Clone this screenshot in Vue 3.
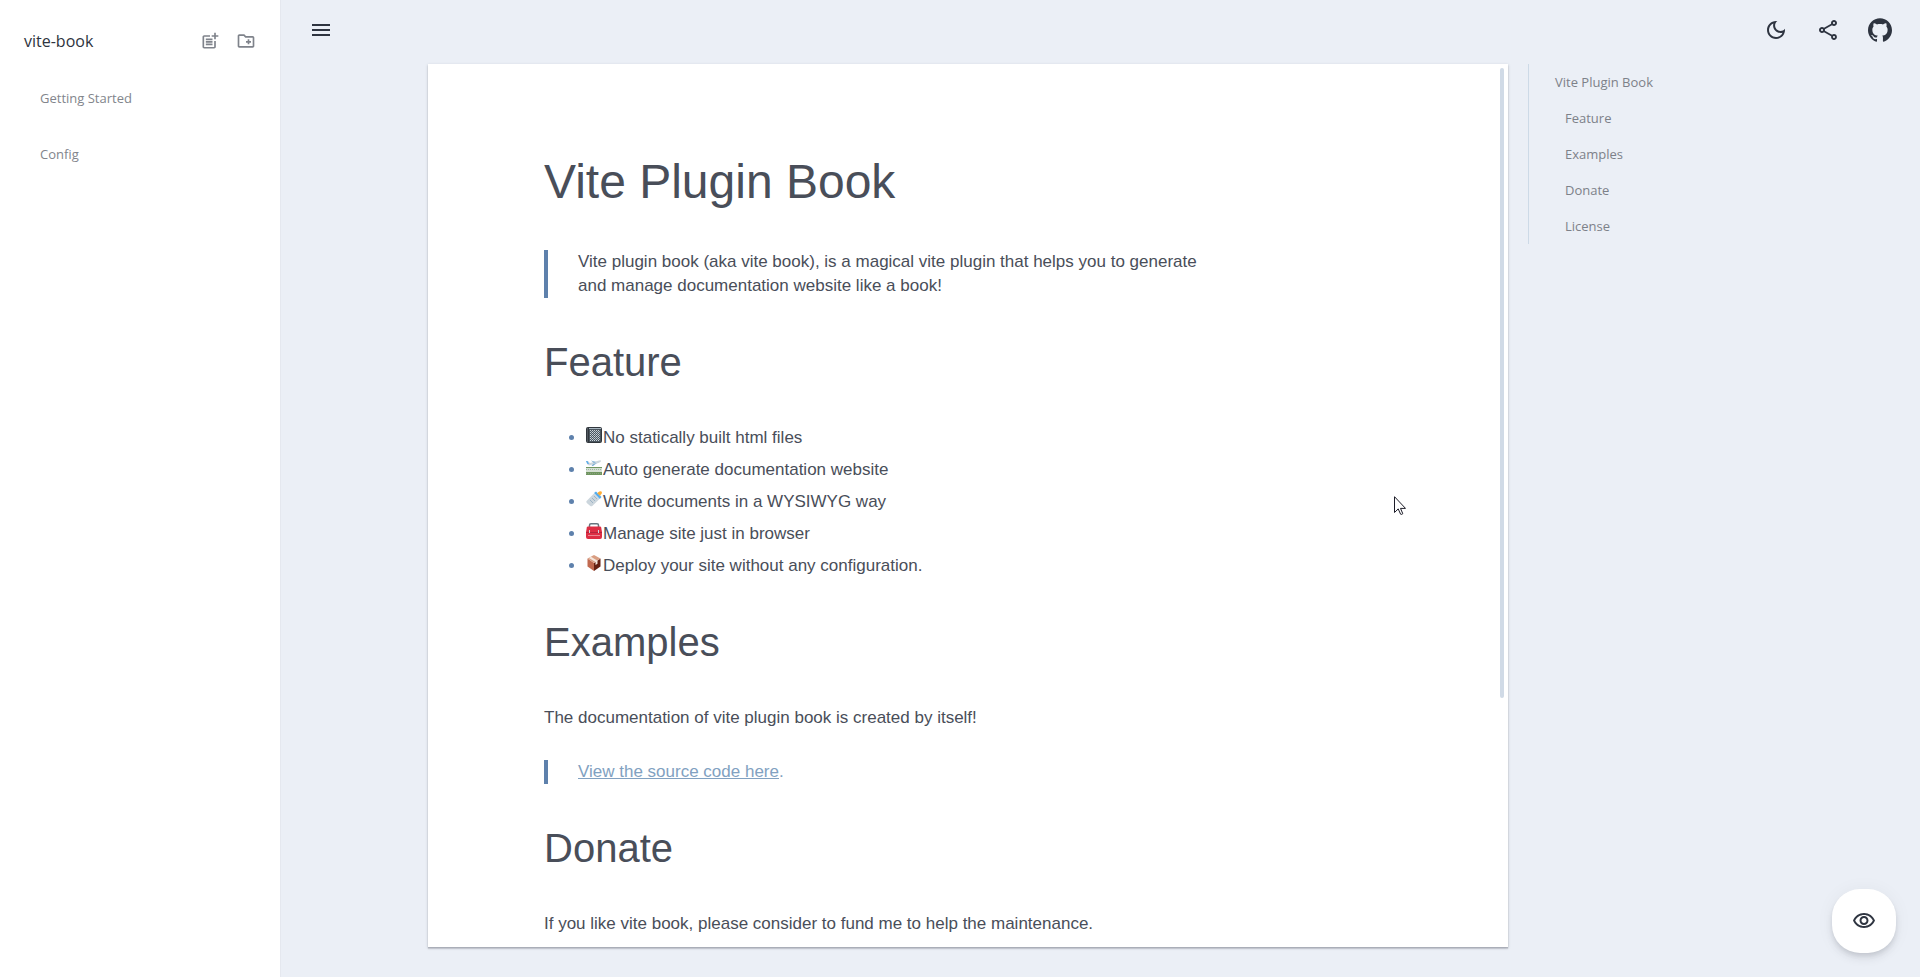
<script setup>
const chapters = ['Getting Started', 'Config']

const outline = [
  { text: 'Vite Plugin Book', level: 1 },
  { text: 'Feature', level: 2 },
  { text: 'Examples', level: 2 },
  { text: 'Donate', level: 2 },
  { text: 'License', level: 2 },
]
</script>

<template>
  <div class="layout">
    <aside class="sidebar">
      <header class="sidebar-head">
        <a class="brand" href="#">vite-book</a>
        <div class="sidebar-tools">
          <button type="button" class="tool" aria-label="New page">
            <svg viewBox="0 0 24 24"><path d="M17 19.22H5V7h7V5H5c-1.1 0-2 .9-2 2v12c0 1.1.9 2 2 2h12c1.1 0 2-.9 2-2v-7h-2v7.22zM19 2h-2v3h-3v2h3v3h2V7h3V5h-3V2zM7 9h8v2H7zM7 12h8v2H7zM7 15h8v2H7z" /></svg>
          </button>
          <button type="button" class="tool" aria-label="New folder">
            <svg viewBox="0 0 24 24"><path d="M20 6h-8l-2-2H4c-1.11 0-1.99.89-1.99 2L2 18c0 1.11.89 2 2 2h16c1.11 0 2-.89 2-2V8c0-1.11-.89-2-2-2zm0 12H4V6h5.17l2 2H20v10zm-8-4h2v2h2v-2h2v-2h-2v-2h-2v2h-2z" /></svg>
          </button>
        </div>
      </header>
      <nav class="chapters">
        <a v-for="chapter in chapters" :key="chapter" class="chapter" href="#">{{ chapter }}</a>
      </nav>
    </aside>

    <main class="main">
      <header class="topbar">
        <button type="button" class="action" aria-label="Toggle menu">
          <svg viewBox="0 0 24 24"><path d="M3 18h18v-2H3v2zm0-5h18v-2H3v2zm0-7v2h18V6H3z" /></svg>
        </button>
        <div class="actions">
          <button type="button" class="action" aria-label="Dark mode">
            <svg viewBox="0 0 24 24"><path d="M9.37 5.51c-.18.64-.27 1.31-.27 1.99 0 4.08 3.32 7.4 7.4 7.4.68 0 1.35-.09 1.99-.27C17.45 17.19 14.93 19 12 19c-3.86 0-7-3.14-7-7 0-2.93 1.81-5.45 4.37-6.49zM12 3c-4.97 0-9 4.03-9 9s4.03 9 9 9 9-4.03 9-9c0-.46-.04-.92-.1-1.36-.98 1.37-2.58 2.26-4.4 2.26-2.98 0-5.4-2.42-5.4-5.4 0-1.81.89-3.42 2.26-4.4-.44-.06-.9-.1-1.36-.1z" /></svg>
          </button>
          <button type="button" class="action" aria-label="Share">
            <svg viewBox="0 0 24 24"><path d="M18 16.08c-.76 0-1.44.3-1.96.77L8.91 12.7c.05-.23.09-.46.09-.7s-.04-.47-.09-.7l7.05-4.11c.54.5 1.25.81 2.04.81 1.66 0 3-1.34 3-3s-1.34-3-3-3-3 1.34-3 3c0 .24.04.47.09.7L8.04 9.81C7.5 9.31 6.79 9 6 9c-1.66 0-3 1.34-3 3s1.34 3 3 3c.79 0 1.5-.31 2.04-.81l7.12 4.16c-.05.21-.08.43-.08.65 0 1.61 1.31 2.92 2.92 2.92s2.92-1.31 2.92-2.92-1.31-2.92-2.92-2.92zM18 4c.55 0 1 .45 1 1s-.45 1-1 1-1-.45-1-1 .45-1 1-1zM6 13c-.55 0-1-.45-1-1s.45-1 1-1 1 .45 1 1-.45 1-1 1zm12 7.02c-.55 0-1-.45-1-1s.45-1 1-1 1 .45 1 1-.45 1-1 1z" /></svg>
          </button>
          <a class="action" href="#" aria-label="GitHub">
            <svg viewBox="0 0 24 24"><path d="M12 .297c-6.63 0-12 5.373-12 12 0 5.303 3.438 9.8 8.205 11.385.6.113.82-.258.82-.577 0-.285-.01-1.04-.015-2.04-3.338.724-4.042-1.61-4.042-1.61C4.422 18.07 3.633 17.7 3.633 17.7c-1.087-.744.084-.729.084-.729 1.205.084 1.838 1.236 1.838 1.236 1.07 1.835 2.809 1.305 3.495.998.108-.776.417-1.305.76-1.605-2.665-.3-5.466-1.332-5.466-5.93 0-1.31.465-2.38 1.235-3.22-.135-.303-.54-1.523.105-3.176 0 0 1.005-.322 3.3 1.23.96-.267 1.98-.399 3-.405 1.02.006 2.04.138 3 .405 2.28-1.552 3.285-1.23 3.285-1.23.645 1.653.24 2.873.12 3.176.765.84 1.23 1.91 1.23 3.22 0 4.61-2.805 5.625-5.475 5.92.42.36.81 1.096.81 2.22 0 1.606-.015 2.896-.015 3.286 0 .315.21.69.825.57C20.565 22.092 24 17.592 24 12.297c0-6.627-5.373-12-12-12" /></svg>
          </a>
        </div>
      </header>

      <div class="content">
        <article class="page">
          <div class="document">
            <h1>Vite Plugin Book</h1>
            <blockquote>
              Vite plugin book (aka vite book), is a magical vite plugin that helps you to generate<br />and manage documentation website like a book!
            </blockquote>

            <h2>Feature</h2>
            <ul>
              <li>
                <svg class="emoji" viewBox="0 0 16 16" aria-hidden="true">
                  <rect x="0" y="0" width="16" height="16" rx="2" fill="#31373d" />
                  <rect x="3" y="2" width="12" height="13" rx="1" fill="#4b565f" />
                  <path d="M3 1.500h12" stroke="#aab8c2" />
                  <path d="M4 3.500h10M4 5.500h10M4 7.500h10M4 9.500h10M4 11.500h10M4 13.500h10" stroke="#ccd6dd" stroke-dasharray="1 1" />
                  <path d="M5 4.500h9M5 6.500h9M5 8.500h9M5 10.500h9M5 12.500h9" stroke="#aab8c2" stroke-dasharray="1 1" />
                  <path d="M1.500 1v14" stroke="#50585f" />
                </svg>No statically built html files
              </li>
              <li>
                <svg class="emoji" viewBox="0 0 16 16" aria-hidden="true">
                  <rect y="8" width="16" height="8" fill="#6f9660" />
                  <rect y="9" width="16" height="4" fill="#d5dfd4" />
                  <path d="M0 10.500h16" stroke="#9fb6a0" stroke-dasharray="1 1" />
                  <path d="M0 14.500h16" stroke="#8aa17e" stroke-dasharray="1 1" />
                  <path d="M0 2l2 0 2 2 9-2.500q2-.5 2 .5T12.500 4L3 6.500 1 5z" fill="#ccd6dd" />
                  <path d="M5 1.500l5 1.500-2 1zM7 5l4-1-4 3H5.500z" fill="#7fb0d5" />
                  <path d="M0 2h1.500L3 5 1.500 5z" fill="#55acee" />
                </svg>Auto generate documentation website
              </li>
              <li>
                <svg class="emoji" viewBox="0 0 16 16" aria-hidden="true">
                  <path d="M8 2.500l5.500 5.500-7 6.700q-1.200 1-2.500 0L.8 12q-1-1.200 0-2.300z" fill="#ccd6dd" />
                  <path d="M4 9l3 3M6 7l3 3M8 5l3 3" stroke="#9db4c6" />
                  <path d="M8 2l2-1.500L15.500 6l-1.700 2z" fill="#55acee" />
                  <path d="M11 2q1-.2 1.500-1Q14-.4 15.500.5q1 1.500-.3 2.700-1 .6-1 1.800z" fill="#ffac33" />
                </svg>Write documents in a WYSIWYG way
              </li>
              <li>
                <svg class="emoji" viewBox="0 0 16 16" aria-hidden="true">
                  <path d="M3.500 5V2.200Q3.500.800 5 .800h6q1.500 0 1.500 1.400V5" fill="none" stroke="#66757f" stroke-width="1.500" />
                  <path d="M2 3.500h12q1 0 1.200 1L16 9v5q0 2-2 2H2q-2 0-2-2V9l.8-4.500q.2-1 1.200-1z" fill="#dd2e44" />
                  <path d="M0 9h16v1H0z" fill="#b5243b" />
                  <path d="M3.500 7v3M12.500 7v3" stroke="#ccd6dd" />
                  <path d="M2 12.500h12" stroke="#ea8490" />
                </svg>Manage site just in browser
              </li>
              <li>
                <svg class="emoji" viewBox="0 0 16 16" aria-hidden="true">
                  <path d="M1.500 3.500L8 8v8l-6.500-4.500z" fill="#c1694f" />
                  <path d="M14.500 3.500L8 8v8l6.500-4.500z" fill="#662113" />
                  <path d="M8 0l6.500 3.500L8 8 1.500 3.500z" fill="#d99e82" />
                  <path d="M5 1.700l6.500 4v3L9.500 10V7L3 3z" fill="#f4e6dc" />
                </svg>Deploy your site without any configuration.
              </li>
            </ul>

            <h2>Examples</h2>
            <p>The documentation of vite plugin book is created by itself!</p>
            <blockquote class="link-quote"><a href="#">View the source code here</a>.</blockquote>

            <h2>Donate</h2>
            <p>If you like vite book, please consider to fund me to help the maintenance.</p>
          </div>
          <div class="scroll-thumb"></div>
          <svg class="pointer" viewBox="0 0 12 19" aria-hidden="true">
            <path d="M.5.700v15.800l3.700-3.600 2.400 5.300q1 .6 2.200-.5L6.500 12.400h5z" fill="#fff" stroke="#1c1c28" />
          </svg>
        </article>

        <nav class="outline">
          <a
            v-for="item in outline"
            :key="item.text"
            href="#"
            class="outline-item"
            :class="{ nested: item.level > 1 }"
          >{{ item.text }}</a>
        </nav>
      </div>
    </main>

    <button type="button" class="preview" aria-label="Preview">
      <svg viewBox="0 0 24 24"><path d="M12 6c3.79 0 7.17 2.13 8.82 5.5C19.17 14.87 15.79 17 12 17s-7.17-2.13-8.82-5.5C4.83 8.13 8.21 6 12 6m0-2C7 4 2.73 7.11 1 11.5 2.73 15.89 7 19 12 19s9.27-3.11 11-7.5C21.27 7.11 17 4 12 4zm0 5c1.38 0 2.5 1.12 2.5 2.5S13.38 14 12 14s-2.5-1.12-2.5-2.5S10.62 9 12 9m0-2c-2.48 0-4.5 2.02-4.5 4.5S9.52 16 12 16s4.500-2.02 4.500-4.500S14.48 7 12 7z" /></svg>
    </button>
  </div>
</template>

<style>
body {
  margin: 0;
  background: #ebeff6;
}
</style>

<style scoped>
.layout {
  display: flex;
  height: 100vh;
  overflow: hidden;
  background: #ebeff6;
  color: #2e3440;
  font-family: "Segoe UI", "Open Sans", "Noto Sans", sans-serif;
}

a {
  color: inherit;
  text-decoration: none;
}

button {
  padding: 0;
  border: 0;
  background: none;
  color: inherit;
  font: inherit;
  cursor: pointer;
}

svg {
  fill: currentColor;
}

.sidebar {
  flex: none;
  box-sizing: border-box;
  width: 281px;
  border-right: 1px solid #e5e8ef;
  background: #fff;
}

.sidebar-head {
  display: flex;
  align-items: center;
  justify-content: space-between;
  height: 42px;
  padding: 20px 24px 8px;
}

.brand {
  font-size: 16px;
}

.sidebar-tools {
  display: flex;
  gap: 16px;
  color: #7f838b;
}

.tool {
  display: flex;
}

.tool svg {
  width: 20px;
  height: 20px;
}

.chapters {
  display: flex;
  flex-direction: column;
}

.chapter {
  padding: 0 40px;
  color: #82858c;
  font-size: 13px;
  line-height: 56px;
}

.main {
  flex: 1;
  display: flex;
  flex-direction: column;
  min-width: 0;
}

.topbar {
  display: flex;
  align-items: center;
  justify-content: space-between;
  height: 60px;
  margin-bottom: 4px;
  padding: 0 20px;
}

.actions {
  display: flex;
  gap: 12px;
}

.action {
  display: flex;
  align-items: center;
  justify-content: center;
  width: 40px;
  height: 40px;
}

.action svg,
.preview svg {
  width: 24px;
  height: 24px;
}

.content {
  flex: 1;
  display: flex;
  justify-content: center;
  gap: 20px;
  min-height: 0;
  padding-bottom: 30px;
}

.page {
  position: relative;
  flex: 0 1 1080px;
  min-width: 0;
  background: #fff;
  box-shadow: 0 1px 1px rgba(46, 52, 64, 0.14), 0 2px 1px rgba(46, 52, 64, 0.12), 0 1px 3px rgba(46, 52, 64, 0.2);
}

.document {
  box-sizing: border-box;
  height: 100%;
  padding: 90px 116px 0;
  overflow: hidden;
  color: #494e59;
  font-family: "Liberation Sans", Arial, sans-serif;
  font-size: 17px;
  line-height: 24px;
}

.document h1,
.document h2 {
  margin: 40px 0;
  font-weight: 400;
}

.document h1 {
  margin-top: 0;
  font-size: 48px;
  line-height: 56px;
}

.document h2 {
  font-size: 40px;
  line-height: 48px;
}

.document p {
  margin: 0 0 30px;
}

.document blockquote {
  margin: 0;
  padding-left: 30px;
  border-left: 4px solid #5e81ac;
}

.document .link-quote {
  color: #81a1c1;
}

.link-quote a {
  text-decoration: underline;
}

.document ul {
  display: flex;
  flex-direction: column;
  gap: 8px;
  margin: 0;
  padding-left: 42px;
}

.document li::marker {
  color: #5e81ac;
}

.emoji {
  width: 16px;
  height: 16px;
  margin-right: 1px;
}

.scroll-thumb {
  position: absolute;
  top: 4px;
  right: 4px;
  width: 4px;
  height: calc(72% - 6px);
  border-radius: 4px;
  background: #d0dae6;
}

.pointer {
  position: absolute;
  top: 432px;
  left: 966px;
  width: 12px;
  height: 19px;
}

.outline {
  flex: 0 0 245px;
  box-sizing: border-box;
  align-self: flex-start;
  display: flex;
  flex-direction: column;
  padding-left: 26px;
  border-left: 1px solid #cddae7;
}

.outline-item {
  color: #7d8189;
  font-size: 13px;
  line-height: 36px;
}

.outline-item.nested {
  padding-left: 10px;
}

.preview {
  position: fixed;
  right: 24px;
  bottom: 24px;
  display: flex;
  align-items: center;
  justify-content: center;
  width: 64px;
  height: 64px;
  border-radius: 28px;
  background: #fff;
  box-shadow: 0 3px 5px -1px rgba(46, 52, 64, 0.14), 0 6px 10px rgba(46, 52, 64, 0.08), 0 1px 18px rgba(46, 52, 64, 0.05);
}
</style>
